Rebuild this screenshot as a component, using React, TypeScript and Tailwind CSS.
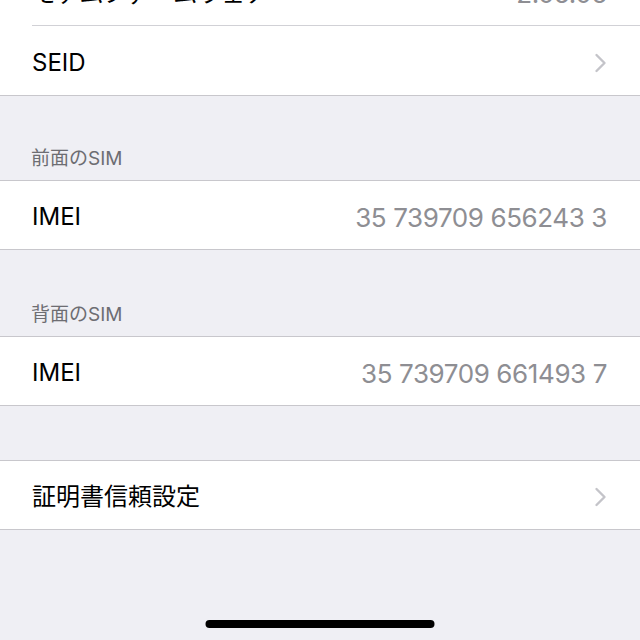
import { ReactNode } from "react";

const font = { fontFamily: "Inter, 'Noto Sans CJK JP', sans-serif" };

function Chevron() {
  return (
    <svg width="13" height="20" viewBox="0 0 13 20" fill="none" className="shrink-0">
      <path d="M2.5 2 L10.5 10 L2.5 18" stroke="#c4c4c9" strokeWidth="2.4" strokeLinecap="round" strokeLinejoin="round" />
    </svg>
  );
}

function Row({ label, value, chevron, inset, h = "h-[68px]" }: { label: string; value?: string; chevron?: boolean; inset?: boolean; h?: string }) {
  return (
    <div className="pl-[32px]">
      <div className={`${h} flex items-center justify-between pr-[33px] pt-[4px] ${inset ? "border-b border-[#d1d1d6]" : ""}`}>
        <span className="text-[24px] text-black">{label}</span>
        {value && <span className="text-[26px] text-[#8e8e93] tracking-[-0.4px]">{value}</span>}
        {chevron && <Chevron />}
      </div>
    </div>
  );
}

function Section({ children }: { children: ReactNode }) {
  return <div className="bg-white border-y border-[#c8c7cc]">{children}</div>;
}

function Header({ text, h }: { text: string; h: string }) {
  return (
    <div className={`${h} flex items-end pl-[31px] pb-[9px]`}>
      <span className="text-[19px] leading-[24px] text-[#6d6d72]">{text}</span>
    </div>
  );
}

export default function App() {
  return (
    <div style={font} className="relative w-[640px] h-[640px] overflow-hidden bg-[#efeff4] flex flex-col">
      <div className="mt-[-42px] bg-white border-b border-[#c8c7cc]">
        <Row label="モデムファームウェア" value="2.05.06" inset />
        <Row label="SEID" chevron h="h-[69px]" />
      </div>

      <Header text="前面のSIM" h="h-[84px]" />
      <Section>
        <Row label="IMEI" value="35 739709 656243 3" />
      </Section>

      <Header text="背面のSIM" h="h-[86px]" />
      <Section>
        <Row label="IMEI" value="35 739709 661493 7" />
      </Section>

      <div className="h-[54px]" />
      <Section>
        <Row label="証明書信頼設定" chevron />
      </Section>

      <div className="absolute bottom-[12px] left-1/2 -translate-x-1/2 w-[229px] h-[8px] rounded-full bg-black" />
    </div>
  );
}
